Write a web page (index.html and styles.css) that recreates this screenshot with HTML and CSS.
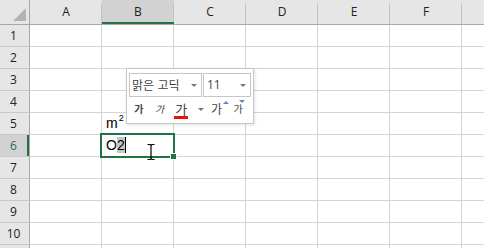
FILE: index.html
```html
<!DOCTYPE html>
<html lang="ko">
<head>
    <meta charset="UTF-8">
    <title>Sheet1</title>
    <link rel="stylesheet" href="styles.css">
</head>
<body>

    <div class="sheet">
        <div class="row head">
            <div class="corner"><span class="tri"></span></div>
            <div class="col">A</div>
            <div class="col on">B</div>
            <div class="col">C</div>
            <div class="col">D</div>
            <div class="col">E</div>
            <div class="col">F</div>
            <div class="col"></div>
        </div>

        <div class="row"><div class="num">1</div><div class="cell"></div><div class="cell"></div><div class="cell"></div><div class="cell"></div><div class="cell"></div><div class="cell"></div><div class="cell"></div></div>
        <div class="row"><div class="num">2</div><div class="cell"></div><div class="cell"></div><div class="cell"></div><div class="cell"></div><div class="cell"></div><div class="cell"></div><div class="cell"></div></div>
        <div class="row"><div class="num">3</div><div class="cell"></div><div class="cell"></div><div class="cell"></div><div class="cell"></div><div class="cell"></div><div class="cell"></div><div class="cell"></div></div>
        <div class="row"><div class="num">4</div><div class="cell"></div><div class="cell"></div><div class="cell"></div><div class="cell"></div><div class="cell"></div><div class="cell"></div><div class="cell"></div></div>
        <div class="row"><div class="num">5</div><div class="cell"></div><div class="cell">m<sup>2</sup></div><div class="cell"></div><div class="cell"></div><div class="cell"></div><div class="cell"></div><div class="cell"></div></div>
        <div class="row"><div class="num on">6</div><div class="cell"></div><div class="cell">O<span class="hl">2</span><span class="caret"></span></div><div class="cell"></div><div class="cell"></div><div class="cell"></div><div class="cell"></div><div class="cell"></div></div>
        <div class="row"><div class="num">7</div><div class="cell"></div><div class="cell"></div><div class="cell"></div><div class="cell"></div><div class="cell"></div><div class="cell"></div><div class="cell"></div></div>
        <div class="row"><div class="num">8</div><div class="cell"></div><div class="cell"></div><div class="cell"></div><div class="cell"></div><div class="cell"></div><div class="cell"></div><div class="cell"></div></div>
        <div class="row"><div class="num">9</div><div class="cell"></div><div class="cell"></div><div class="cell"></div><div class="cell"></div><div class="cell"></div><div class="cell"></div><div class="cell"></div></div>
        <div class="row"><div class="num">10</div><div class="cell"></div><div class="cell"></div><div class="cell"></div><div class="cell"></div><div class="cell"></div><div class="cell"></div><div class="cell"></div></div>
        <div class="row"><div class="num"></div><div class="cell"></div><div class="cell"></div><div class="cell"></div><div class="cell"></div><div class="cell"></div><div class="cell"></div><div class="cell"></div></div>

        <!-- active cell B6 -->
        <div class="active"><span class="handle"></span></div>

        <!-- mouse pointer -->
        <svg class="ibeam" width="10" height="18" viewBox="0 0 10 18">
            <path d="M1.5 1.5h2.5l1 1 1-1h2.5M5 2.5v13M1.5 16.5h2.5l1-1 1 1h2.5" fill="none" stroke="#000" stroke-width="1.2"/>
        </svg>

        <!-- mini toolbar -->
        <div class="mini">
            <div class="mini-top">
                <div class="combo font">맑은 고딕<span class="dd"></span></div>
                <div class="combo size">11<span class="dd"></span></div>
            </div>
            <div class="mini-bottom">
                <div class="btn bold">가</div>
                <div class="btn ital">가</div>
                <div class="btn under"><span>가</span></div>
                <div class="btn arrow"><span class="dd"></span></div>
                <div class="btn grow">가</div>
                <div class="btn shrink">가</div>
            </div>
        </div>
    </div>

</body>
</html>
```

FILE: styles.css
```css
body {
    margin: 0;
    padding: 0;
    background-color: #fff;
    font-family: "Open Sans", "Noto Sans", sans-serif;
    color: #222;
    overflow: hidden;
}

.sheet {
    position: relative;
    width: 484px;
    height: 248px;
    overflow: hidden;
}

.row {
    display: grid;
    grid-template-columns: 30px repeat(7, 72px);
    height: 22px;
}

.row > div {
    box-sizing: border-box;
    border-bottom: 1px solid #d4d4d4;
    border-right: 1px solid #d4d4d4;
}

/* column headers */
.head {
    height: 25px;
    background-color: #e6e6e6;
}

.head > div {
    border-bottom: 1px solid #a8a8a8;
    border-right: none;
}

.col {
    font-size: 12px;
    line-height: 24px;
    text-align: center;
    background: linear-gradient(#c2c2c2, #c2c2c2) right bottom / 1px 21px no-repeat, #e6e6e6;
}

.col.on {
    background: linear-gradient(#c2c2c2, #c2c2c2) right bottom / 1px 21px no-repeat, #d2d2d2;
    box-shadow: inset 0 -2px 0 #217346;
}

.corner {
    position: relative;
    background-color: #e6e6e6;
    border-right: 1px solid #a8a8a8 !important;
}

.corner .tri {
    position: absolute;
    right: 3px;
    bottom: 3px;
    width: 0;
    height: 0;
    border-left: 13px solid transparent;
    border-bottom: 13px solid #b4b4b4;
}

/* row headers */
.num {
    background-color: #e6e6e6;
    border-right: 1px solid #a8a8a8 !important;
    border-bottom-color: #c8c8c8 !important;
    font-size: 12px;
    line-height: 21px;
    text-align: center;
    padding-right: 2px;
}

.num.on {
    background-color: #d2d2d2;
    box-shadow: inset -2px 0 0 #217346;
    color: #217346;
}

/* cells */
.cell {
    display: flex;
    align-items: flex-end;
    padding: 0 0 3px 4px;
    font-family: "Liberation Sans", Arial, sans-serif;
    font-size: 14px;
    line-height: 16px;
    color: #000;
}

.cell sup {
    font-size: 9px;
    line-height: 9px;
    align-self: flex-start;
    margin-top: 1px;
    margin-left: 1px;
}

.hl {
    background-color: #c6c6c6;
}

.caret {
    display: inline-block;
    width: 1px;
    height: 16px;
    background-color: #000;
}

.active {
    position: absolute;
    left: 100px;
    top: 133px;
    width: 75px;
    height: 25px;
    box-sizing: border-box;
    border: 2px solid #217346;
}

.active .handle {
    position: absolute;
    right: -4px;
    bottom: -4px;
    width: 5px;
    height: 5px;
    background-color: #217346;
    border: 1px solid #fff;
}

.ibeam {
    position: absolute;
    left: 146px;
    top: 143px;
}

/* mini toolbar */
.mini {
    position: absolute;
    left: 126px;
    top: 68px;
    width: 128px;
    height: 56px;
    box-sizing: border-box;
    padding: 4px 2px 0 2px;
    background-color: #fff;
    border: 1px solid #c8c8c8;
    box-shadow: 1px 1px 3px rgba(0, 0, 0, 0.12);
}

.mini-top {
    display: flex;
    gap: 1px;
}

.combo {
    position: relative;
    box-sizing: border-box;
    height: 24px;
    border: 1px solid #c6c6c6;
    font-size: 12px;
    line-height: 22px;
    color: #444;
    padding-left: 2px;
}

.combo.font {
    width: 73px;
    font-family: "Noto Sans CJK KR", sans-serif;
}

.combo.size {
    width: 48px;
    padding-left: 3px;
}

.dd {
    position: absolute;
    width: 0;
    height: 0;
    border-left: 3px solid transparent;
    border-right: 3px solid transparent;
    border-top: 3px solid #777;
}

.combo .dd {
    right: 4px;
    top: 10px;
}

.mini-bottom {
    display: flex;
    align-items: center;
    height: 24px;
    font-family: "Noto Sans CJK KR", sans-serif;
    color: #444;
}

.btn {
    position: relative;
    text-align: center;
    font-size: 10px;
    line-height: 20px;
}

.btn.bold {
    width: 20px;
    font-weight: bold;
}

.btn.ital {
    width: 22px;
    font-style: italic;
}

.btn.under {
    width: 22px;
    font-size: 13px;
}

.btn.under span {
    display: inline-block;
    line-height: 14px;
    padding: 0 1px;
    border-bottom: 3px solid #e51400;
}

.btn.arrow {
    width: 16px;
    height: 20px;
}

.btn.arrow .dd {
    left: 6px;
    top: 9px;
}

.btn.grow {
    width: 18px;
    font-size: 12px;
}

.btn.grow::after {
    content: "";
    position: absolute;
    right: -4px;
    top: 2px;
    border-left: 3px solid transparent;
    border-right: 3px solid transparent;
    border-bottom: 3px solid #5a8ac6;
}

.btn.shrink {
    width: 26px;
}

.btn.shrink::after {
    content: "";
    position: absolute;
    right: 6px;
    top: 1px;
    border-left: 3px solid transparent;
    border-right: 3px solid transparent;
    border-top: 3px solid #5a8ac6;
}
```
